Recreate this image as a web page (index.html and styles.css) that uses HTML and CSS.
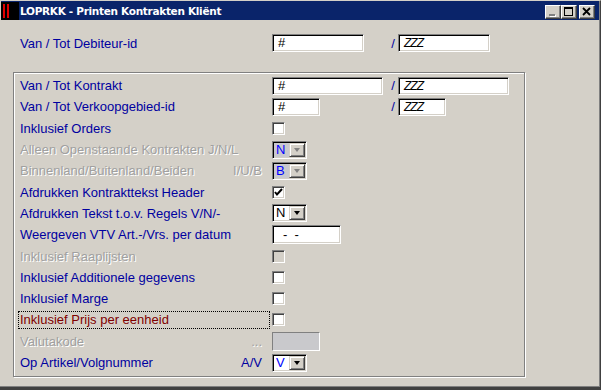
FILE: index.html
```html
<!DOCTYPE html>
<html lang="nl">
<head>
    <meta charset="UTF-8">
    <title>LOPRKK - Printen Kontrakten Kliënt</title>
    <link rel="stylesheet" href="styles.css">
</head>
<body>

<div class="window">

    <!-- Titelbalk -->
    <div class="titlebar">
        <svg class="app-icon" width="18" height="19" viewBox="0 0 18 19">
            <rect x="0" y="1" width="18" height="18" fill="#000"/>
            <rect x="2" y="3" width="2" height="14" fill="#e00000"/>
            <rect x="6" y="3" width="2" height="14" fill="#e00000"/>
        </svg>
        <span class="title">LOPRKK - Printen Kontrakten Kliënt</span>
        <div class="caption-buttons">
            <span class="cap-btn">
                <svg width="14" height="12" viewBox="0 0 14 12">
                    <rect x="4" y="9" width="6" height="2" fill="#fff"/>
                    <rect x="3" y="8" width="6" height="2" fill="#808080"/>
                </svg>
            </span>
            <span class="cap-btn">
                <svg width="14" height="12" viewBox="0 0 14 12">
                    <rect x="2.5" y="1.5" width="8" height="8" fill="none" stroke="#000"/>
                    <rect x="2" y="1" width="9" height="2" fill="#000"/>
                </svg>
            </span>
            <span class="cap-btn close">
                <svg width="14" height="12" viewBox="0 0 14 12">
                    <path d="M3 2 L10 9 M10 2 L3 9" stroke="#000" stroke-width="1.8" fill="none"/>
                </svg>
            </span>
        </div>
    </div>

    <div class="content">

        <!-- Debiteur -->
        <div class="row top-row">
            <div class="lbl">Van / Tot Debiteur-id</div>
            <div class="ctl"><span class="edit w91">#</span></div>
            <span class="slash">/</span>
            <div class="ctl"><span class="edit w91 zzz">ZZZ</span></div>
        </div>

        <!-- Selecties -->
        <div class="group">
            <div class="row">
                <div class="lbl">Van / Tot Kontrakt</div>
                <div class="ctl"><span class="edit w110">#</span></div>
                <span class="slash">/</span>
                <div class="ctl"><span class="edit w110 zzz">ZZZ</span></div>
            </div>
            <div class="row">
                <div class="lbl">Van / Tot Verkoopgebied-id</div>
                <div class="ctl"><span class="edit w47">#</span></div>
                <span class="slash">/</span>
                <div class="ctl"><span class="edit w47 zzz">ZZZ</span></div>
            </div>
            <div class="row">
                <div class="lbl">Inklusief Orders</div>
                <div class="ctl"><span class="check"></span></div>
            </div>
            <div class="row">
                <div class="lbl disabled">Alleen Openstaande Kontrakten J/N/L</div>
                <div class="ctl">
                    <span class="combo off"><span class="val">N</span><span class="drop"></span></span>
                </div>
            </div>
            <div class="row">
                <div class="lbl disabled"><span>Binnenland/Buitenland/Beiden</span><span>I/U/B</span></div>
                <div class="ctl">
                    <span class="combo off"><span class="val">B</span><span class="drop"></span></span>
                </div>
            </div>
            <div class="row">
                <div class="lbl">Afdrukken Kontrakttekst Header</div>
                <div class="ctl">
                    <span class="check">
                        <svg width="9" height="9" viewBox="0 0 9 9">
                            <path d="M1 4 L3 6.5 L8 1" stroke="#000" stroke-width="2" fill="none"/>
                        </svg>
                    </span>
                </div>
            </div>
            <div class="row">
                <div class="lbl">Afdrukken Tekst t.o.v. Regels V/N/-</div>
                <div class="ctl">
                    <span class="combo"><span class="val black">N</span><span class="drop"></span></span>
                </div>
            </div>
            <div class="row">
                <div class="lbl">Weergeven VTV Art.-/Vrs. per datum</div>
                <div class="ctl"><span class="edit w68 datum">-&nbsp;&nbsp;-</span></div>
            </div>
            <div class="row">
                <div class="lbl disabled">Inklusief Raaplijsten</div>
                <div class="ctl"><span class="check off"></span></div>
            </div>
            <div class="row">
                <div class="lbl">Inklusief Additionele gegevens</div>
                <div class="ctl"><span class="check"></span></div>
            </div>
            <div class="row">
                <div class="lbl">Inklusief Marge</div>
                <div class="ctl"><span class="check"></span></div>
            </div>
            <div class="row">
                <div class="lbl focus">Inklusief Prijs per eenheid</div>
                <div class="ctl"><span class="check"></span></div>
            </div>
            <div class="row">
                <div class="lbl disabled"><span>Valutakode</span><span>...</span></div>
                <div class="ctl"><span class="edit w47 grey"></span></div>
            </div>
            <div class="row">
                <div class="lbl"><span>Op Artikel/Volgnummer</span><span>A/V</span></div>
                <div class="ctl">
                    <span class="combo"><span class="val">V</span><span class="drop"></span></span>
                </div>
            </div>
        </div>

    </div>
</div>

</body>
</html>
```

FILE: styles.css
```css
body {
    margin: 0;
    background: #D4D0C8;
    font-family: 'Liberation Sans', Arial, sans-serif;
}

.window {
    width: 601px;
    height: 390px;
    box-sizing: border-box;
    background: #D4D0C8;
    border-top: 1px solid #D4D0C8;
    border-right: 1px solid #404040;
    border-bottom: 3px solid #404040;
    box-shadow: inset -1px -1px 0 #808080;
    overflow: hidden;
}

/* titelbalk */
.titlebar {
    height: 19px;
    margin: 0 1px;
    background: #0A246A;
    color: white;
    display: flex;
    align-items: center;
}

.app-icon {
    display: block;
    align-self: flex-start;
}

.title {
    margin-left: 1px;
    font-family: 'DejaVu Sans', Tahoma, sans-serif;
    font-weight: bold;
    font-size: 10.5px;
    letter-spacing: -0.3px;
}

.caption-buttons {
    margin-left: auto;
    margin-right: 4px;
    display: flex;
    padding-top: 2px;
}

.cap-btn {
    width: 16px;
    height: 14px;
    box-sizing: border-box;
    background: #D4D0C8;
    border: 1px solid;
    border-color: #fff #404040 #404040 #fff;
    box-shadow: inset -1px -1px 0 #808080;
}

.cap-btn svg {
    display: block;
}

.cap-btn.close {
    margin-left: 2px;
}

/* inhoud */
.content {
    padding-top: 14px;
}

.row {
    display: grid;
    grid-template-columns: 254px 116px 10px auto;
    align-items: center;
    height: 21.3px;
    padding-left: 18px;
}

.top-row {
    height: 18px;
}

.group {
    margin: 20px 0 0 13px;
    width: 512px;
    height: 305px;
    box-sizing: border-box;
    border: 1px solid #808080;
    box-shadow: 1px 1px 0 #fff, inset 1px 1px 0 #fff;
    padding-top: 2px;
}

.group .row {
    padding-left: 4px;
}

.lbl {
    width: 252px;
    height: 18px;
    box-sizing: border-box;
    padding: 0 7px 0 1px;
    border: 1px solid transparent;
    display: flex;
    justify-content: space-between;
    align-items: center;
    font-size: 13px;
    color: #0000A0;
    white-space: nowrap;
}

.lbl.disabled {
    color: #A0A0A0;
    text-shadow: 1px 1px 0 #fff;
}

.lbl.focus {
    color: #800000;
    border: 1px dotted #000;
}

.slash {
    color: #0000A0;
    font-size: 13px;
    text-align: center;
}

.ctl {
    display: flex;
    align-items: center;
}

/* invoervelden */
.edit {
    display: block;
    height: 18px;
    box-sizing: border-box;
    background: #fff;
    border: 1px solid;
    border-color: #808080 #fff #fff #808080;
    box-shadow: inset 1px 1px 0 #000, inset -1px -1px 0 #D4D0C8;
    padding-left: 5px;
    font-size: 13px;
    line-height: 16px;
    color: #000;
}

.w47 { width: 48px; }
.w68 { width: 69px; height: 19px; }
.w91 { width: 92px; }
.w110 { width: 111px; }

.zzz {
    font-style: italic;
    letter-spacing: -1px;
    font-size: 12px;
}

.datum {
    padding-left: 10px;
    line-height: 17px;
}

.edit.grey {
    height: 19px;
    background: #C9C9CC;
    box-shadow: none;
}

.check {
    display: flex;
    align-items: center;
    justify-content: center;
    width: 13px;
    height: 13px;
    box-sizing: border-box;
    background: #fff;
    border: 1px solid;
    border-color: #808080 #fff #fff #808080;
    box-shadow: inset 1px 1px 0 #404040, inset -1px -1px 0 #D4D0C8;
}

.check.off {
    background: #D4D0C8;
}

.check svg {
    display: block;
}

/* keuzelijsten */
.combo {
    display: flex;
    width: 35px;
    height: 18px;
    box-sizing: border-box;
    padding: 1px;
    background: #fff;
    border: 1px solid;
    border-color: #808080 #fff #fff #808080;
    box-shadow: inset 1px 1px 0 #000, inset -1px -1px 0 #D4D0C8;
}

.combo .val {
    flex: 1;
    padding-left: 2px;
    font-size: 13px;
    line-height: 14px;
    color: #0000FF;
}

.combo .val.black {
    color: #000;
}

.combo.off .val {
    background: #C9C9CE;
}

.drop {
    position: relative;
    width: 16px;
    height: 14px;
    box-sizing: border-box;
    background: #D4D0C8;
    border: 1px solid;
    border-color: #D4D0C8 #404040 #404040 #D4D0C8;
    box-shadow: inset 1px 1px 0 #fff, inset -1px -1px 0 #808080;
}

.drop::after {
    content: '';
    position: absolute;
    left: 4px;
    top: 4px;
    border-left: 3.5px solid transparent;
    border-right: 3.5px solid transparent;
    border-top: 4px solid #000;
}

.combo.off .drop::after {
    border-top-color: #808080;
}
```
